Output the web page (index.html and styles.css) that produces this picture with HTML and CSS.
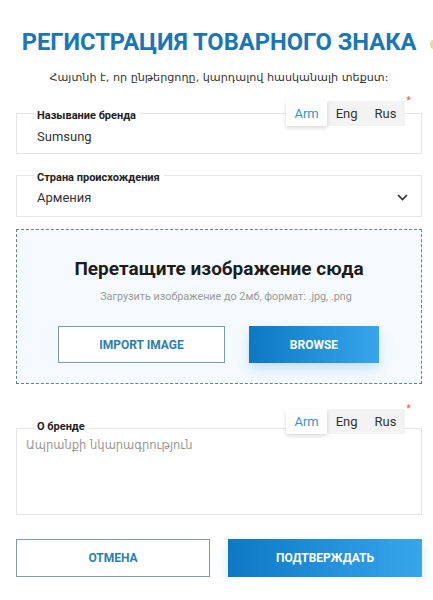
FILE: index.html
```html
<!DOCTYPE html>
<html>
<head>
  <title>Регистрация товарного знака</title>
  <meta charset="utf-8" />
  <link rel="stylesheet" href="styles.css">
</head>
<body>
  <div class="page">
    <h1 class="title">РЕГИСТРАЦИЯ ТОВАРНОГО ЗНАКА</h1>
    <span class="edge-dot"></span>
    <p class="lead">Հայտնի է, որ ընթերցողը, կարդալով հասկանալի տեքստ:</p>

    <div class="field field-name">
      <label class="legend">Называние бренда</label>
      <div class="value">Sumsung</div>
      <div class="langs">
        <span class="lang active">Arm</span>
        <span class="lang">Eng</span>
        <span class="lang">Rus</span>
        <span class="req">*</span>
      </div>
    </div>

    <div class="field field-country">
      <label class="legend">Страна происхождения</label>
      <div class="value select">
        <span>Армения</span>
        <svg width="11" height="7" viewBox="0 0 11 7"><path d="M1 1 L5.5 5.5 L10 1" fill="none" stroke="#333" stroke-width="1.7"/></svg>
      </div>
    </div>

    <div class="drop">
      <h2>Перетащите изображение сюда</h2>
      <p class="hint">Загрузить изображение до 2мб, формат: .jpg, .png</p>
      <div class="drop-buttons">
        <button class="btn btn-outline btn-import">IMPORT IMAGE</button>
        <button class="btn btn-primary btn-browse">BROWSE</button>
      </div>
    </div>

    <div class="field field-about">
      <label class="legend">О бренде</label>
      <div class="value placeholder">Ապրանքի նկարագրություն</div>
      <div class="langs">
        <span class="lang active">Arm</span>
        <span class="lang">Eng</span>
        <span class="lang">Rus</span>
        <span class="req">*</span>
      </div>
    </div>

    <div class="actions">
      <button class="btn btn-outline">ОТМЕНА</button>
      <button class="btn btn-primary">ПОДТВЕРЖДАТЬ</button>
    </div>
  </div>
</body>
</html>
```

FILE: styles.css
```css
body {
  margin: 0;
  font-family: Roboto, "Noto Sans", "DejaVu Sans", sans-serif;
  color: #222;
  background: #fff;
}
.page {
  position: relative;
  padding: 0 11px 0 16px;
}
.title {
  margin: 0;
  padding-top: 28px;
  text-align: center;
  font-size: 23.7px;
  font-weight: 700;
  color: #1b76b8;
}
.edge-dot {
  position: absolute;
  right: -4px;
  top: 40px;
  width: 7px;
  height: 9px;
  border-radius: 50%;
  background: #e8d9a0;
}
.lead {
  margin: 15px 0 0;
  text-align: center;
  font-family: "DejaVu Sans", sans-serif;
  font-size: 11.2px;
  color: #333;
}
.field {
  position: relative;
  box-sizing: border-box;
  border: 1px solid #e6e6e6;
  padding: 0 20px;
}
.legend {
  position: absolute;
  left: 17px;
  top: -5px;
  padding: 0 4px 0 3px;
  background: #fff;
  font-size: 11px;
  line-height: 13px;
  font-weight: 700;
  color: #222;
}
.field-name {
  margin-top: 29px;
  height: 41px;
}
.field-country {
  margin-top: 21px;
  height: 42px;
}
.value {
  padding-top: 15px;
  font-size: 13px;
  line-height: 15px;
  color: #333;
}
.select {
  display: flex;
  justify-content: space-between;
  align-items: center;
  padding-top: 14px;
}
.select svg {
  margin-right: -7px;
}
.langs {
  position: absolute;
  right: 16px;
  top: -13px;
  display: flex;
  background: #f3f3f3;
}
.lang {
  padding: 0 8.5px;
  height: 25px;
  line-height: 25px;
  font-size: 13px;
  color: #333;
}
.lang.active {
  background: #fff;
  color: #3a93c5;
  box-shadow: 0 2px 4px rgba(0, 0, 0, 0.15);
}
.req {
  position: absolute;
  right: -6px;
  top: -7px;
  font-size: 11px;
  color: #d66;
}
.drop {
  box-sizing: border-box;
  height: 155px;
  margin-top: 12px;
  border: 1px dashed #6f7f8c;
  background: #f5faff;
  padding-top: 27px;
  text-align: center;
}
.drop h2 {
  margin: 0;
  font-size: 19px;
  line-height: 24px;
  font-weight: 700;
  color: #1d1d1d;
}
.hint {
  margin: 9px 0 0;
  padding-left: 14px;
  font-size: 10.8px;
  line-height: 13px;
  color: #999;
}
.drop-buttons {
  display: flex;
  gap: 24px;
  margin-top: 23px;
  padding-left: 41px;
}
.btn {
  height: 38px;
  font-family: Roboto, sans-serif;
  font-size: 12px;
  font-weight: 700;
  border-radius: 0;
  cursor: pointer;
}
.drop .btn {
  height: 37px;
}
.btn-outline {
  background: #fff;
  color: #2c7fb4;
  border: 1px solid #7e9aab;
}
.btn-primary {
  background: linear-gradient(90deg, #0d78c4, #37a6ec);
  color: #fff;
  border: none;
  box-shadow: 0 6px 12px rgba(30, 130, 200, 0.2);
}
.btn-import {
  width: 167px;
}
.btn-browse {
  width: 130px;
}
.field-about {
  margin-top: 44px;
  height: 87px;
}
.field-about .legend {
  top: -9px;
}
.field-about .langs {
  top: -20px;
}
.placeholder {
  padding-top: 9px;
  margin-left: -11px;
  font-family: "DejaVu Sans", sans-serif;
  font-size: 11.5px;
  color: #999;
}
.actions {
  display: grid;
  grid-template-columns: 194px 194px;
  justify-content: space-between;
  margin-top: 24px;
}
```
